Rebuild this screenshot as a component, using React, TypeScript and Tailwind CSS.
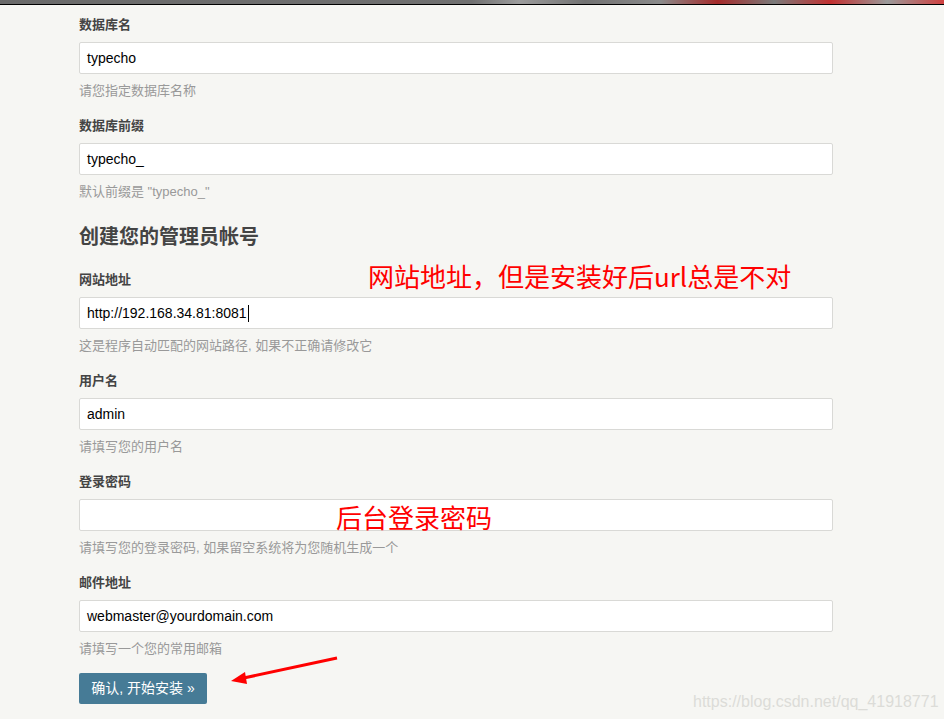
import React from "react";

const sans = "font-['Liberation_Sans','Noto_Sans_CJK_SC',sans-serif]";

interface Field {
  label: string;
  value: string;
  desc: string;
  cursor?: boolean;
}

const dbFields: Field[] = [
  { label: "数据库名", value: "typecho", desc: "请您指定数据库名称" },
  { label: "数据库前缀", value: "typecho_", desc: "默认前缀是 \"typecho_\"" },
];

const adminFields: Field[] = [
  {
    label: "网站地址",
    value: "http://192.168.34.81:8081",
    desc: "这是程序自动匹配的网站路径, 如果不正确请修改它",
    cursor: true,
  },
  { label: "用户名", value: "admin", desc: "请填写您的用户名" },
  { label: "登录密码", value: "", desc: "请填写您的登录密码, 如果留空系统将为您随机生成一个" },
  { label: "邮件地址", value: "webmaster@yourdomain.com", desc: "请填写一个您的常用邮箱" },
];

function FormField({ f }: { f: Field }) {
  return (
    <div className="mb-[16px]">
      <label className="block h-[20px] leading-[20px] text-[13px] font-bold text-[#444]">
        {f.label}
      </label>
      <div className="mt-[7px] h-[32px] bg-white border border-[#d9d9d6] rounded-[2px] pl-[7px] flex items-center text-[14px] text-black">
        {f.value}
        {f.cursor && <span className="ml-[1px] w-[1px] h-[17px] bg-black" />}
      </div>
      <p className="mt-[8px] h-[18px] leading-[18px] text-[13px] text-[#999]">{f.desc}</p>
    </div>
  );
}

export default function App() {
  return (
    <div className={`relative w-[944px] h-[719px] overflow-hidden bg-[#f6f6f3] ${sans}`}>
      <div className="h-[4px] bg-[linear-gradient(90deg,#6a6a6a_0%,#707070_50%,#9c9c9c_55%,#727272_62%,#8a8a8a_70%,#a52a2a_76%,#7a7a7a_82%,#c23030_88%,#9a9a9a_94%,#d04040_100%)]" />
      <div className="h-[1px] bg-black" />

      <div className="ml-[79px] w-[754px] pt-[10px]">
        {dbFields.map((f) => (
          <FormField key={f.label} f={f} />
        ))}

        <h3 className="mt-[22px] mb-[19px] h-[28px] leading-[28px] text-[20px] font-bold text-[#444]">
          创建您的管理员帐号
        </h3>

        {adminFields.map((f) => (
          <FormField key={f.label} f={f} />
        ))}

        <button className="-mt-[1px] w-[128px] h-[31px] bg-[#467b96] rounded-[2px] text-white text-[14px]">
          确认, 开始安装 »
        </button>
      </div>

      {/* annotations */}
      <div className="absolute left-[368px] top-[260px] text-[26px] leading-[32px] text-[#ff0000] font-['Noto_Sans_CJK_SC',sans-serif]">
        网站地址，但是安装好后url总是不对
      </div>
      <div className="absolute left-[336px] top-[501px] text-[26px] leading-[32px] text-[#ff0000] font-['Noto_Sans_CJK_SC',sans-serif]">
        后台登录密码
      </div>
      <svg className="absolute left-[225px] top-[650px]" width="120" height="40" viewBox="0 0 120 40">
        <line x1="112" y1="8" x2="14" y2="29" stroke="#ff0000" strokeWidth="3" />
        <polygon points="6,31 20,22 22,34" fill="#ff0000" />
      </svg>

      <div className="absolute left-[693px] top-[690px] text-[16px] text-[#dcdcd8]">
        https://blog.csdn.net/qq_41918771
      </div>
    </div>
  );
}
